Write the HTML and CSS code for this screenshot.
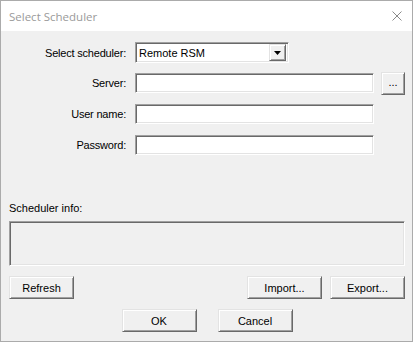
FILE: index.html
```html
<!DOCTYPE html>
<html lang="en">
<head>
    <meta charset="UTF-8">
    <meta name="viewport" content="width=device-width, initial-scale=1.0">
    <title>Select Scheduler</title>
    <link rel="stylesheet" href="styles.css">
</head>
<body>
    <div class="window">
        <div class="titlebar">
            <span class="title">Select Scheduler</span>
            <svg class="close" width="10" height="10" viewBox="0 0 10 10">
                <path d="M0.5 0.5 L9.5 9.5 M9.5 0.5 L0.5 9.5" stroke="#8a8a8a" stroke-width="1" fill="none"/>
            </svg>
        </div>

        <div class="dialog-body">
            <div class="row row-first">
                <label class="label">Select scheduler:</label>
                <div class="combo">
                    <span class="combo-value">Remote RSM</span>
                    <span class="combo-btn">
                        <svg width="7" height="4" viewBox="0 0 7 4"><path d="M0 0 H7 L3.5 4 Z" fill="#000"/></svg>
                    </span>
                </div>
            </div>
            <div class="row">
                <label class="label">Server:</label>
                <div class="field field-server"></div>
                <button class="btn btn-browse">...</button>
            </div>
            <div class="row">
                <label class="label">User name:</label>
                <div class="field field-server"></div>
            </div>
            <div class="row">
                <label class="label">Password:</label>
                <div class="field field-server"></div>
            </div>

            <div class="info-label">Scheduler info:</div>
            <div class="info-box"></div>

            <div class="btn-row">
                <button class="btn btn-small">Refresh</button>
                <span class="spacer"></span>
                <button class="btn">Import...</button>
                <button class="btn">Export...</button>
            </div>

            <div class="dialog-actions">
                <button class="btn">OK</button>
                <button class="btn">Cancel</button>
            </div>
        </div>
    </div>
</body>
</html>
```

FILE: styles.css
```css
body{
    margin: 0px;
    font-family: "Liberation Sans", Arial, sans-serif;
    font-size: 11px;
    color: #000;
}
.window{
    width: 413px;
    height: 342px;
    box-sizing: border-box;
    border: 1px solid #ababab;
    background-color: #f0f0f0;
}
.titlebar{
    height: 30px;
    background-color: #fff;
    display: flex;
    align-items: center;
    justify-content: space-between;
    padding: 0px 10px 0px 8px;
}
.title{
    font-family: "Open Sans", "Noto Sans", sans-serif;
    font-size: 11.5px;
    color: #9a9a9a;
    margin-top: 1px;
}
.close{
    display: block;
}
.dialog-body{
    padding: 11px 7px 0px 8px;
}

/* form rows */
.row{
    display: flex;
    align-items: center;
    height: 20px;
    margin-bottom: 11px;
}
.row-first{
    height: 21px;
    margin-bottom: 10px;
}
.label{
    width: 117px;
    margin-right: 9px;
    text-align: right;
    letter-spacing: -0.2px;
}
.field,
.combo,
.info-box{
    box-sizing: border-box;
    border: 1px solid;
    border-color: #a0a0a0 #fff #fff #a0a0a0;
    box-shadow: inset 1px 1px 0px #696969, inset -1px -1px 0px #e3e3e3;
    background-color: #fff;
}
.field-server{
    width: 239px;
    height: 20px;
}
.combo{
    width: 154px;
    height: 21px;
    display: flex;
    align-items: center;
    padding: 2px;
}
.combo-value{
    flex: 1;
    padding-left: 1px;
}
.combo-btn{
    width: 17px;
    height: 17px;
    box-sizing: border-box;
    display: flex;
    align-items: center;
    justify-content: center;
    background-color: #f0f0f0;
    border: 1px solid;
    border-color: #e3e3e3 #696969 #696969 #e3e3e3;
    box-shadow: inset 1px 1px 0px #fff, inset -1px -1px 0px #a0a0a0;
}
.combo-btn svg{
    display: block;
    margin-top: 1px;
}

/* buttons */
.btn{
    box-sizing: border-box;
    width: 75px;
    height: 23px;
    padding: 0px;
    font-family: inherit;
    font-size: 11px;
    color: #000;
    background-color: #f0f0f0;
    border: 1px solid;
    border-color: #e3e3e3 #696969 #696969 #e3e3e3;
    box-shadow: inset 1px 1px 0px #fff, inset -1px -1px 0px #a0a0a0;
}
.btn-browse{
    width: 24px;
    margin-left: 7px;
    flex: none;
    padding-bottom: 3px;
}
.btn-small{
    width: 65px;
}

.info-label{
    line-height: 13px;
    margin-top: 47px;
    margin-bottom: 6px;
}
.info-box{
    height: 45px;
    background-color: #f0f0f0;
}
.btn-row{
    display: flex;
    gap: 8px;
    margin-top: 10px;
}
.spacer{
    flex: 1;
}
.dialog-actions{
    display: flex;
    justify-content: center;
    gap: 21px;
    margin-top: 10px;
}
```
